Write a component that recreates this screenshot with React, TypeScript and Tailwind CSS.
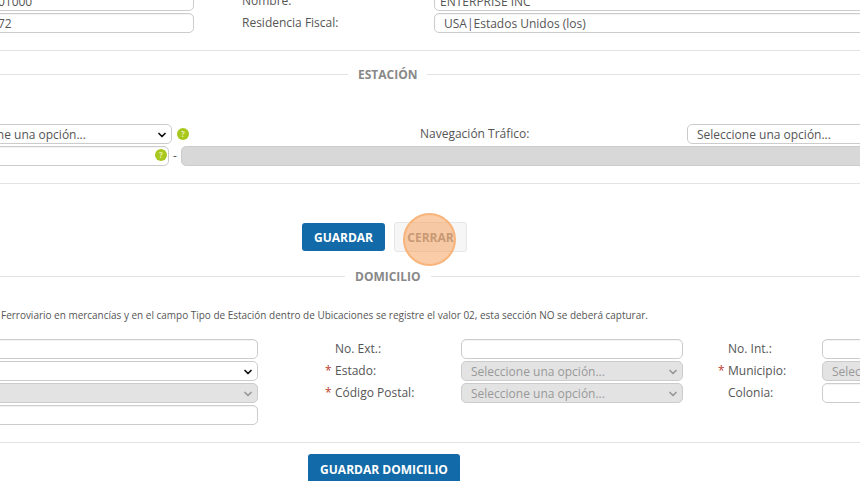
import { ChevronDown } from "lucide-react"

const fieldCls =
  "block h-5 rounded-[5px] border border-[#ccc] bg-white px-2.5 text-xs text-[#555] shadow-[inset_0_1px_1px_rgba(0,0,0,0.05)] outline-none"

const OPTION = "Seleccione una opción..."

const Help = () => (
  <span className="flex h-3 w-3 shrink-0 items-center justify-center rounded-full bg-[#a8c81e] text-[8px] leading-none font-bold text-[#e8f0b0]">
    ?
  </span>
)

const Select = ({ value, disabled, className }: { value?: string; disabled?: boolean; className: string }) => (
  <div className={`relative h-5 ${className}`}>
    <select
      disabled={disabled}
      className={`block h-5 w-full appearance-none rounded-[5px] border border-[#ccc] pt-px pl-[9px] text-xs outline-none ${
        disabled ? "bg-[#e3e3e3] text-[#999]" : "bg-white text-[#555]"
      }`}
    >
      <option>{value}</option>
    </select>
    <ChevronDown
      size={12}
      strokeWidth={3.5}
      className={`pointer-events-none absolute top-[5px] right-[4px] ${disabled ? "text-[#999]" : "text-[#111]"}`}
    />
  </div>
)

const Hr = ({ className }: { className: string }) => (
  <div className={`h-px w-full bg-[#e3e3e3] ${className}`} />
)

const SectionTitle = ({ label, gap, className }: { label: string; gap: string; className: string }) => (
  <div className={`flex h-4 items-center ${className}`}>
    <div className={`h-px bg-[#e3e3e3] ${gap}`} />
    <span className="px-2.5 pt-0.5 text-xs font-bold text-[#888]">{label}</span>
    <div className="h-px flex-1 bg-[#e3e3e3]" />
  </div>
)

const Label = ({ text, req, className }: { text: string; req?: boolean; className: string }) => (
  <div className={`flex items-center whitespace-nowrap text-xs text-[#555] ${className}`}>
    <span className="w-2.5 text-[#c0392b]">{req ? "*" : ""}</span>
    {text}
  </div>
)

export default function App() {
  return (
    <div className="relative h-[481px] w-[860px] overflow-hidden bg-white font-['Open_Sans',sans-serif]">
      <div className="-mt-[9px] flex flex-col">
        {/* ── TOP FIELDS ── */}
        <div className="-ml-[68px] flex h-5 w-[1100px]">
          <input readOnly defaultValue="XEXX010101000" className={`${fieldCls} w-[262px]`} />
          <div className="ml-12 flex w-[192px] items-center text-xs text-[#555]">Nombre:</div>
          <input readOnly defaultValue="ENTERPRISE INC" className={`${fieldCls} w-[500px] !pl-[5px]`} />
        </div>
        <div className="mt-0.5 -ml-[68px] flex h-5 w-[1100px]">
          <input readOnly defaultValue="1234567872" className={`${fieldCls} w-[262px]`} />
          <div className="ml-12 flex w-[192px] items-center text-xs text-[#555]">Residencia Fiscal:</div>
          <input readOnly defaultValue="USA|Estados Unidos (los)" className={`${fieldCls} w-[500px] !pl-[9px]`} />
        </div>

        <Hr className="mt-[17px]" />

        {/* ── ESTACIÓN ── */}
        <SectionTitle label="ESTACIÓN" gap="w-[348px]" className="mt-[15px]" />

        <div className="mt-[42px] -ml-[58px] flex h-5 w-[1100px] items-center">
          <Select value={OPTION} className="w-[230px]" />
          <span className="ml-[5px]">
            <Help />
          </span>
          <div className="ml-[231px] w-[267px] text-xs text-[#555]">Navegación Tráfico:</div>
          <Select value={OPTION} className="w-[300px]" />
        </div>
        <div className="mt-0.5 -ml-[58px] flex h-5 w-[1100px] items-center">
          <div className="relative w-[227px]">
            <input readOnly className={`${fieldCls} w-full`} />
            <span className="absolute top-[3px] right-[2px]">
              <Help />
            </span>
          </div>
          <span className="w-3 text-center text-xs text-[#555]">-</span>
          <input disabled className="block h-5 w-[800px] rounded-[5px] border border-[#ccc] bg-[#d8d8d8]" />
        </div>

        <Hr className="mt-[17px]" />

        {/* ── BUTTONS ── */}
        <div className="mt-[38px] ml-[302px] flex h-[30px] items-center gap-[9px]">
          <button className="h-7 w-[83px] rounded-[3px] bg-[#126aa8] pt-px text-xs font-bold text-white">GUARDAR</button>
          <button className="h-[30px] w-[73px] rounded-[3px] border border-[#e6e6e6] bg-[#f6f6f6] pt-px text-xs font-bold text-[#999]">
            CERRAR
          </button>
        </div>

        {/* ── DOMICILIO ── */}
        <SectionTitle label="DOMICILIO" gap="w-[345px]" className="mt-4" />

        <p className="mt-6 ml-px h-3.5 text-[9.97px] leading-[14px] whitespace-nowrap text-[#555]">
          Ferroviario en mercancías y en el campo Tipo de Estación dentro de Ubicaciones se registre el valor 02, esta
          sección NO se deberá capturar.
        </p>

        <div className="mt-[17px] -ml-[100px] grid w-[1022px] grid-cols-[358px_203px_222px_139px_100px] gap-y-0.5">
          <input readOnly className={`${fieldCls} w-full`} />
          <Label text="No. Ext.:" className="pl-[67px]" />
          <input readOnly className={`${fieldCls} w-full`} />
          <Label text="No. Int.:" className="pl-[35px]" />
          <input readOnly className={`${fieldCls} w-full`} />

          <Select className="w-full" />
          <Label text="Estado:" req className="pl-[67px]" />
          <Select value={OPTION} disabled className="w-full" />
          <Label text="Municipio:" req className="pl-[35px]" />
          <Select value={OPTION} disabled className="w-full" />

          <Select disabled className="w-full" />
          <Label text="Código Postal:" req className="pl-[67px]" />
          <Select value={OPTION} disabled className="w-full" />
          <Label text="Colonia:" className="pl-[35px]" />
          <input readOnly className={`${fieldCls} w-full`} />

          <input readOnly className={`${fieldCls} w-full`} />
        </div>

        <Hr className="mt-[17px]" />

        <button className="mt-[11px] ml-[308px] h-[30px] w-[152px] shrink-0 rounded-[3px] bg-[#126aa8] pt-px text-xs font-bold text-white">
          GUARDAR DOMICILIO
        </button>
      </div>

      {/* click highlight over CERRAR */}
      <div className="absolute top-[213px] left-[403px] h-[53px] w-[53px] rounded-full border-2 border-[#f8b47a] bg-[#f59a4f]/50" />
    </div>
  )
}
